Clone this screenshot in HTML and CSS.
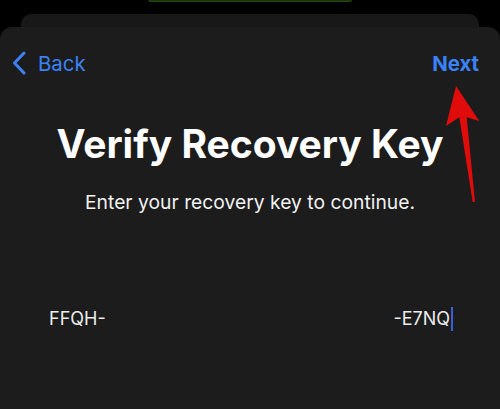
FILE: index.html
```html
<!DOCTYPE html>
<html>
<head>
<meta charset="utf-8">
<link rel="stylesheet" href="styles.css">
</head>
<body>
<div class="screen">
  <div class="pill"></div>
  <div class="sheet-back"></div>
  <div class="sheet">
    <div class="nav">
      <div class="back">
        <svg class="chev" width="14" height="24" viewBox="0 0 14 24"><path d="M12 2 L2.5 12 L12 22" fill="none" stroke="#3b82f6" stroke-width="3" stroke-linecap="round" stroke-linejoin="round"/></svg>
        <span>Back</span>
      </div>
      <div class="next">Next</div>
    </div>
    <h1 class="title">Verify Recovery Key</h1>
    <p class="sub">Enter your recovery key to continue.</p>
    <div class="key">
      <span>FFQH-</span>
      <span class="end">-E7NQ<span class="cursor"></span></span>
    </div>
  </div>
  <svg class="arrow" width="500" height="409" viewBox="0 0 500 409"><polygon points="456,86 479.3,121 466.7,117.3 475,202 472.7,202 459.3,117.3 446,126" fill="#e00b0b"/></svg>
</div>
</body>
</html>
```
FILE: styles.css
```css
html, body {
  margin: 0;
  padding: 0;
  background: #000;
}
.screen {
  position: relative;
  width: 500px;
  height: 409px;
  overflow: hidden;
  display: flex;
  flex-direction: column;
  font-family: Inter, "Liberation Sans", sans-serif;
}
.pill {
  width: 204px;
  height: 3px;
  margin: -1px auto 0;
  background: #1a3210;
  border-radius: 0 0 20px 20px;
  box-shadow: inset 0 -1px 0 #244a14;
}
.sheet-back {
  margin: 12px 21px 0;
  height: 13px;
  background: #181818;
  border-radius: 10px 10px 0 0;
}
.sheet {
  flex: 1;
  background: #1c1c1c;
  border-radius: 12px 12px 0 0;
  display: flex;
  flex-direction: column;
}
.nav {
  display: flex;
  justify-content: space-between;
  align-items: center;
  height: 24px;
  padding: 24px 21px 0 12px;
}
.back {
  display: flex;
  align-items: center;
  gap: 12px;
  color: #3b82f6;
  font-size: 20.4px;
}
.chev {
  display: block;
}
.next {
  color: #3b82f6;
  font-size: 20.4px;
  font-weight: 700;
}
.title {
  margin: 46px 0 0;
  text-align: center;
  color: #fff;
  font-size: 39px;
  line-height: 46px;
  font-weight: 700;
}
.sub {
  margin: 23px 0 0;
  text-align: center;
  color: #f2f2f2;
  font-size: 19.3px;
  line-height: 24px;
}
.key {
  display: flex;
  justify-content: space-between;
  align-items: center;
  margin: 93px 47px 0 49px;
  color: #ececec;
  font-size: 18px;
  line-height: 24px;
}
.end {
  display: flex;
  align-items: center;
}
.cursor {
  display: inline-block;
  width: 2px;
  height: 24px;
  margin-left: 1px;
  background: #3c5ce0;
}
.arrow {
  position: absolute;
  left: 0;
  top: 0;
  pointer-events: none;
}
```
